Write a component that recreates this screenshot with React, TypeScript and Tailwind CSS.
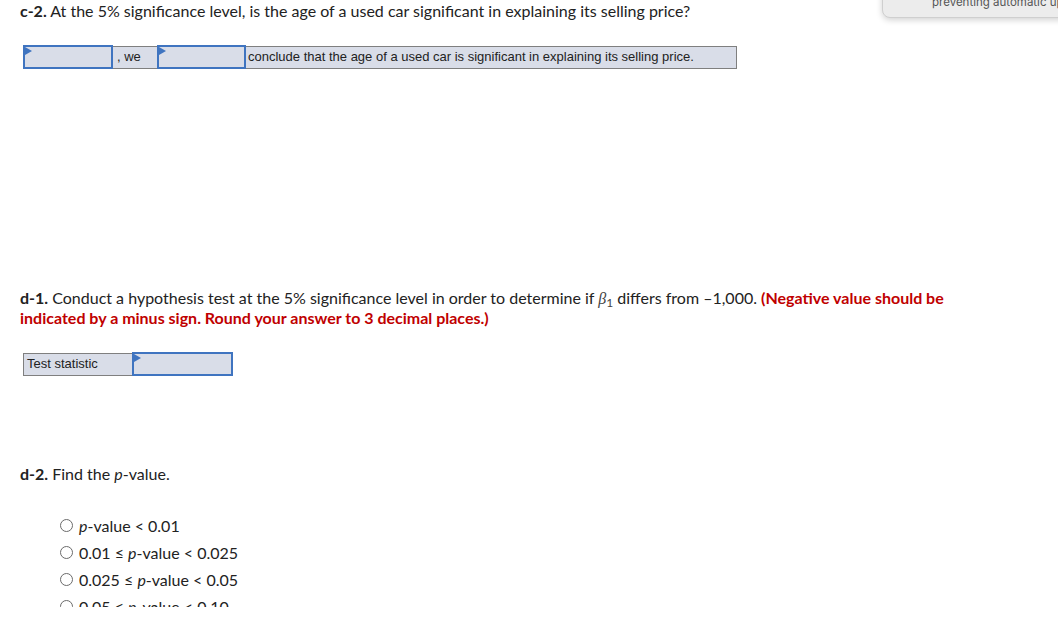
import React from "react";

/* ─── Dropdown cell with the little blue corner marker ─────────────────────── */
function SelectCell({ width }: { width: string }) {
  return (
    <td className={`relative ${width} h-[22px] border-2 border-[#3f74c0] bg-[#d9dde8] p-0`}>
      <span className="absolute left-0 top-0 h-0 w-0 border-l-[7px] border-t-[4px] border-b-[4px] border-l-[#3f74c0] border-t-transparent border-b-transparent" />
    </td>
  );
}

function Radio({ children }: { children: React.ReactNode }) {
  return (
    <label className="flex h-[27px] items-center gap-[6px]">
      <span className="h-[13px] w-[13px] rounded-full border border-[#6b6b6b] bg-white" />
      <span>{children}</span>
    </label>
  );
}

const P = () => <i className="italic">p</i>;

export default function App() {
  return (
    <div className="relative h-[617px] w-[1058px] overflow-hidden bg-white font-['Lato','Open_Sans',sans-serif] text-[16px] leading-[20px] text-[#222]">
      {/* Browser notification peeking in at the top right */}
      <div className="absolute right-[-20px] top-[-20px] z-10 flex h-[38px] w-[196px] items-end gap-[17px] rounded-[8px] border border-[#cfcfcf] bg-[#ececec] pb-[9px] pl-[18px] shadow-[0_2px_6px_rgba(0,0,0,0.18)]">
        <span className="mb-[10px] h-[16px] w-[14px] shrink-0 rounded-full bg-[#6a6a6a]" />
        <span className="whitespace-nowrap font-['Inter',sans-serif] text-[11.5px] leading-[12px] text-[#555]">preventing automatic up</span>
      </div>

      {/* scrolling question pane, clipped above the bottom edge */}
      <div className="h-[607px] overflow-hidden pl-[20px]">
        {/* ── c-2 ─────────────────────────────────────────────────────── */}
        <p className="pt-[1px]">
          <b>c-2.</b> At the 5% significance level, is the age of a used car significant in explaining its selling price?
        </p>

        <table className="ml-[3px] mt-[24px] border-collapse border border-[#7f7f7f] font-['Liberation_Sans',sans-serif] text-[13px] leading-[14px] text-[#222]">
          <tbody>
            <tr>
              <SelectCell width="w-[88px]" />
              <td className="h-[22px] w-[46px] border border-[#7f7f7f] bg-[#d9dde8] px-[4px]">, we</td>
              <SelectCell width="w-[87px]" />
              <td className="h-[22px] w-[491px] border border-[#7f7f7f] bg-[#d9dde8] px-[2px]">
                conclude that the age of a used car is significant in explaining its selling price.
              </td>
            </tr>
          </tbody>
        </table>

        {/* ── d-1 ─────────────────────────────────────────────────────── */}
        <p className="mt-[219px] w-[935px]">
          <b>d-1.</b> Conduct a hypothesis test at the 5% significance level in order to determine if{" "}
          <i className="font-['Liberation_Serif',serif] leading-[1] text-[#444]">β</i>
          <sub className="text-[12px] leading-[0] text-[#444]">1</sub> differs from –1,000.{" "}
          <b className="text-[#c00000]">(Negative value should be indicated by a minus sign. Round your answer to 3 decimal places.)</b>
        </p>

        <table className="ml-[3px] mt-[24px] border-collapse border border-[#7f7f7f] font-['Liberation_Sans',sans-serif] text-[13px] leading-[14px] text-[#222]">
          <tbody>
            <tr>
              <td className="h-[22px] w-[109px] border border-[#7f7f7f] bg-[#d9dde8] px-[3px]">Test statistic</td>
              <SelectCell width="w-[99px]" />
            </tr>
          </tbody>
        </table>

        {/* ── d-2 ─────────────────────────────────────────────────────── */}
        <p className="mt-[88px]">
          <b>d-2.</b> Find the <P />-value.
        </p>

        <div className="ml-[40px] mt-[28px] flex flex-col">
          <Radio>
            <P />-value &lt; 0.01
          </Radio>
          <Radio>
            0.01 ≤ <P />-value &lt; 0.025
          </Radio>
          <Radio>
            0.025 ≤ <P />-value &lt; 0.05
          </Radio>
          <Radio>
            0.05 ≤ <P />-value &lt; 0.10
          </Radio>
        </div>
      </div>
    </div>
  );
}
